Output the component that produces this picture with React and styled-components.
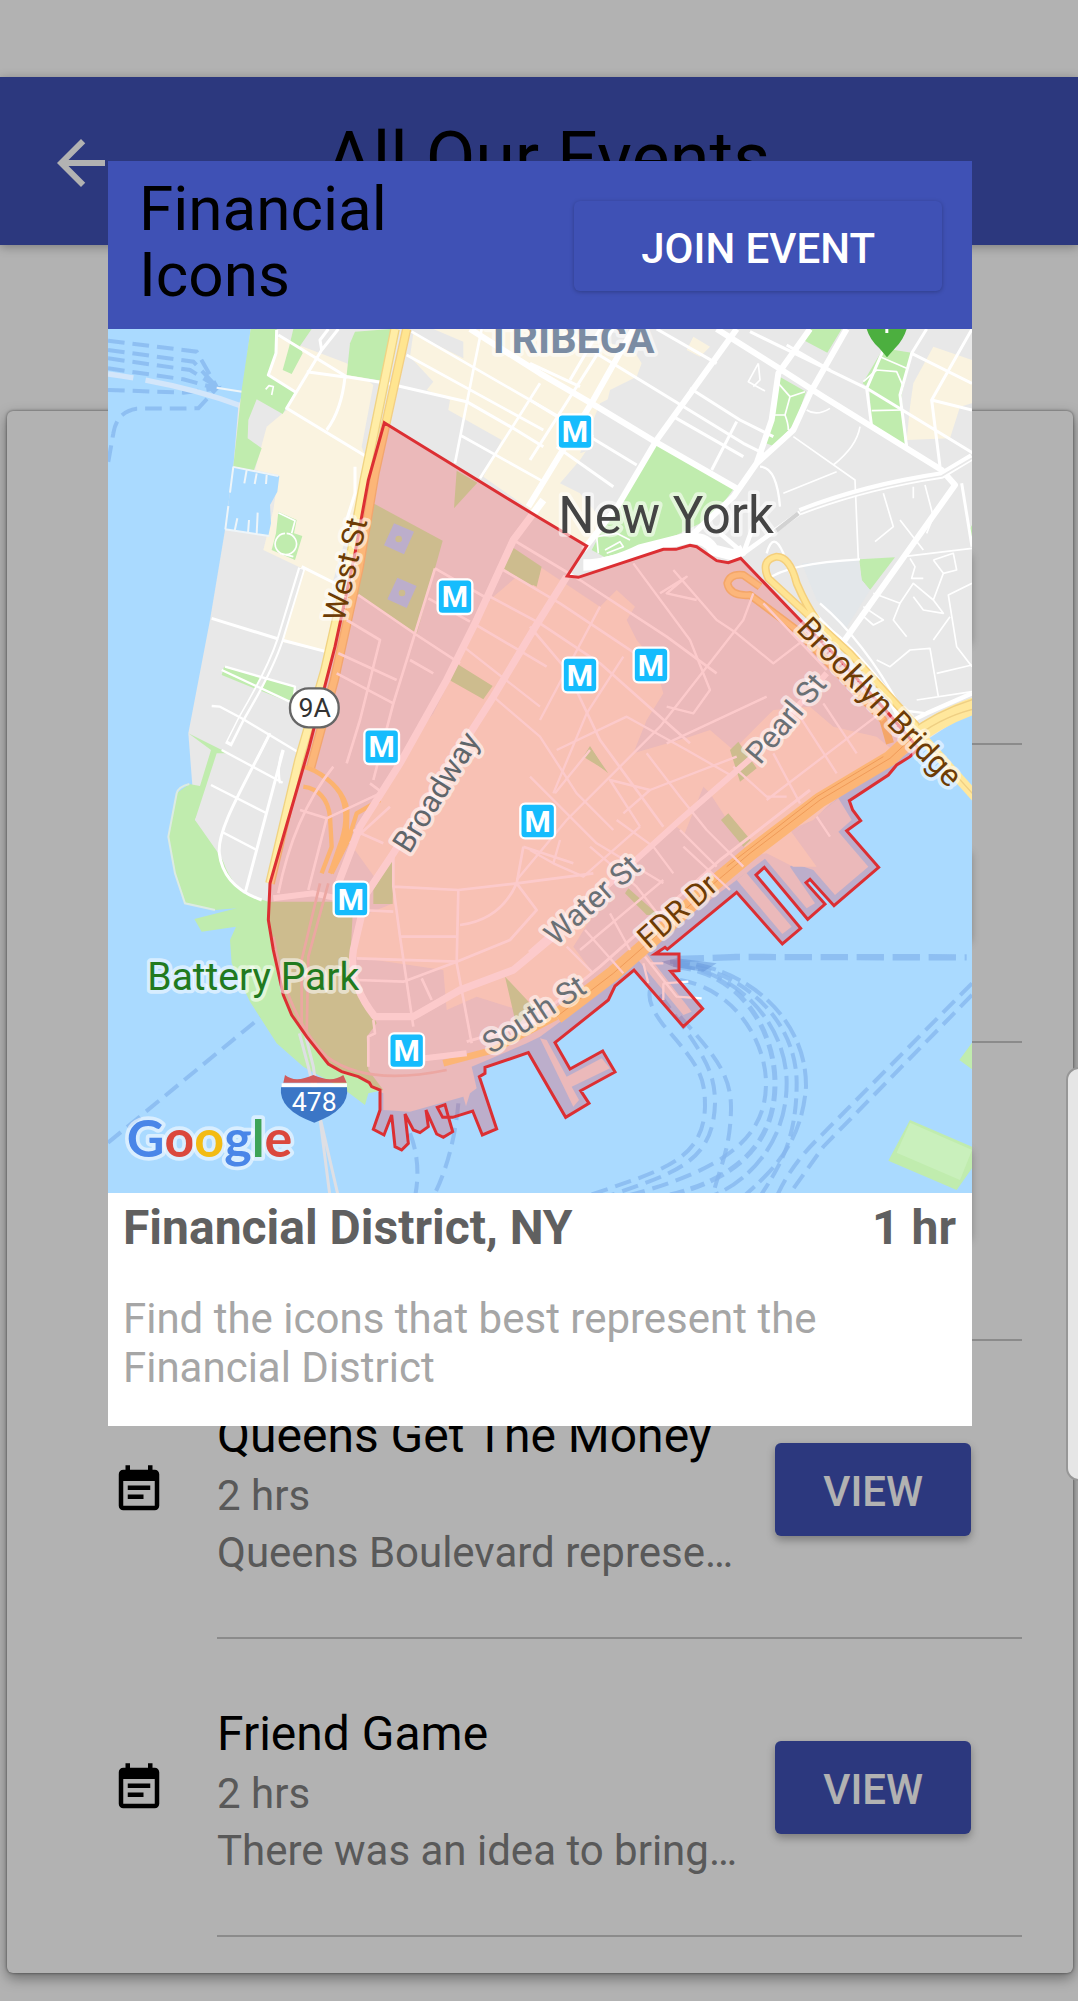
import React from "react";
import styled, { createGlobalStyle } from "styled-components";
import { MdArrowBack, MdEventNote } from "react-icons/md";

const GlobalStyle = createGlobalStyle`
  * { box-sizing: border-box; }
  body {
    margin: 0;
    background: #fff;
    font-family: Roboto, "Liberation Sans", sans-serif;
  }
  h1, h2, h3, p, ul { margin: 0; padding: 0; font-weight: 400; }
`;

const Screen = styled.div`
  position: relative;
  padding-top: 77px;
  padding-bottom: 28px;
  overflow: hidden;
`;

const AppBar = styled.header`
  display: flex;
  align-items: center;
  height: 168px;
  padding: 0 99px 0 45px;
  background: #3f51b5;
  box-shadow: 0 2px 10px rgba(0, 0, 0, 0.3);
`;

const BackButton = styled.button`
  display: flex;
  padding: 4px 0 0;
  border: 0;
  background: none;
  color: #fff;
  font-size: 72px;
`;

const AppTitle = styled.h1`
  flex: 1;
  padding-bottom: 4px;
  text-align: center;
  font-size: 72px;
  line-height: 72px;
  color: #000;
`;

const Card = styled.main`
  margin: 166px 5px 0 7px;
  padding: 36px 0;
  border-radius: 6px;
  background: #fff;
  box-shadow: 0 5px 14px rgba(0, 0, 0, 0.4), 0 0 3px rgba(0, 0, 0, 0.5);
`;

const EventList = styled.ul`
  list-style: none;
`;

const EventRow = styled.li`
  display: flex;
  align-items: center;
  gap: 51px;
  padding: 0 51px 0 105px;
  font-size: 54px;
  color: #000;

  > svg { flex: none; }
`;

const EventContent = styled.div`
  display: flex;
  flex: 1;
  align-items: center;
  justify-content: space-between;
  min-width: 0;
  height: 298px;
  padding-right: 51px;
  border-bottom: 2px solid #c8c8c8;
`;

const EventText = styled.div`
  padding-top: 8px;
`;

const EventName = styled.h3`
  font-size: 48px;
  line-height: 62px;
`;

const EventMeta = styled.p`
  font-size: 42px;
  line-height: 57px;
  color: #808080;
`;

const Button = styled.button`
  flex: none;
  height: ${(p) => (p.$wide ? 90 : 93)}px;
  padding: 6px ${(p) => (p.$wide ? 67 : 48)}px 0;
  border: 0;
  border-radius: 6px;
  background: #3f51b5;
  color: #fff;
  font: 500 42px/48px Roboto, "Liberation Sans", sans-serif;
  box-shadow: ${(p) =>
    p.$wide ? "0 1px 4px rgba(0, 0, 0, 0.25)" : "0 4px 8px rgba(0, 0, 0, 0.3)"};
`;

const Backdrop = styled.div`
  position: absolute;
  inset: 0;
  padding: 161px 106px 0 108px;
  background: rgba(0, 0, 0, 0.3);
`;

const Dialog = styled.section`
  background: #fff;
`;

const DialogHeader = styled.div`
  display: flex;
  align-items: center;
  justify-content: space-between;
  height: 168px;
  padding: 0 30px 6px 31px;
  background: #3f51b5;

  button { margin-top: 8px; }
`;

const DialogTitle = styled.h2`
  width: 300px;
  font-size: 62px;
  line-height: 66px;
`;

const DialogBody = styled.div`
  padding: 6px 16px 34px 15px;
`;

const PlaceLine = styled.div`
  display: flex;
  justify-content: space-between;
  margin-bottom: 38px;
  font-size: 48px;
  font-weight: 700;
  line-height: 57px;
  color: #606060;
`;

const Description = styled.p`
  font-size: 42px;
  line-height: 49px;
  color: #a6a6a6;
`;

const EdgeHandle = styled.div`
  position: absolute;
  top: 1067px;
  right: -14px;
  width: 26px;
  height: 414px;
  border: 2px solid #979797;
  border-radius: 20px;
  background: #e6e6e6;
`;

const MapSvg = styled.svg`
  display: block;
  width: 100%;
  aspect-ratio: 1;

  text { font-family: Roboto, "Liberation Sans", sans-serif; }
`;

const MapLabel = styled.text`
  font-size: ${(p) => p.$size}px;
  font-weight: ${(p) => p.$weight || 400};
  fill: ${(p) => p.$color};
  stroke: rgba(255, 255, 255, 0.55);
  stroke-width: 22px;
  stroke-linejoin: round;
  paint-order: stroke;
`;

const ProviderMark = styled(MapLabel)`
  && { font-family: Lato, sans-serif; }
`;

const GREEN = "#c0ecae";
const CREAM = "#faf3e0";
const LAND = "#e8e8e8";

/* The map is drawn in four sheets of 1290 units, joined at their edges. */
const SHEET = 1290;
const northEast = `translate(${SHEET} 0)`;
const southWest = `translate(0 ${SHEET})`;
const southEast = `translate(${SHEET} ${SHEET})`;

const shift = (dx, dy, points) =>
  points
    .trim()
    .split(/\s+/)
    .map((p) => p.split(",").map(Number))
    .map(([x, y]) => `${x + dx},${y + dy}`)
    .join(" ");

const district = [
  shift(0, 0, "853,308 1320,595"),
  shift(SHEET, 0, "170,678 112,768 145,772 400,688 438,688 480,676 500,680 560,722 595,728 632,715 810,900 930,1020 1075,1180 1165,1285"),
  shift(SHEET, SHEET, `1140,20 1100,45 1075,75 958,152 968,180 992,212 950,242 1046,352 912,467 840,388
    828,398 885,462 833,508 703,352 678,375 812,535 757,582 620,427 412,598 405,592 375,612 447,612
    447,662 422,664 518,776 460,830 312,660 255,708 235,750 75,878 120,957 218,903 255,966 152,1022
    177,1060 107,1102 -5,908`),
  shift(0, SHEET, `1155,952 1155,970 1138,980 1190,1137 1147,1155 1118,1083 1058,1102 1028,1102 1012,1072 1035,1064
    1045,1100 1058,1145 1030,1162 1010,1152 978,1080 985,1130 960,1148 940,1140 915,1092 925,1180 905,1200 885,1190
    875,1095 852,1155 820,1138 840,1080 840,1020 815,1010 808,998 775,980 725,965 685,942 620,860 575,795 550,735
    520,600 505,510 510,400 560,225 625,0`),
  shift(0, 0, "705,980 765,700 805,480"),
].join(" ");

const land = [
  shift(0, 0, "2616,27 452,27 440,120 430,210 415,260 400,440 375,630 330,900 265,1240"),
  shift(0, SHEET, "285,210 350,400 420,480 505,520 560,800 640,950 800,1010 850,1030 850,1080 930,1085 1090,1040 1098,1068 1110,1030 1130,1015 1115,950"),
  shift(SHEET, SHEET, "-10,880 30,860 200,735 300,645 340,600 420,540 620,390 700,330 930,140 1140,5"),
  shift(SHEET, 0, "1190,1260 1326,1170"),
].join(" ");

const stations = [
  [1425, 335], [1065, 830], [1440, 1065], [1653, 1035],
  [845, 1280], [1313, 1503], [753, 1737], [920, 2192],
];

const Roads = ({ color = "#fff", width, d }) => (
  <path d={d} fill="none" stroke={color} strokeWidth={width} strokeLinejoin="round" />
);

const Ferry = ({ d, width = 12, dash = "50 24" }) => (
  <path d={d} fill="none" stroke="#84b6ee" strokeOpacity="0.75" strokeWidth={width} strokeDasharray={dash} />
);

function DistrictMap() {
  return (
    <MapSvg viewBox="24 27 2592 2592" role="img" aria-label="Map of the Financial District">
      <rect x="24" y="27" width="2592" height="2592" fill="#aadaff" />

      {/* ferry routes */}
      <Ferry d="M24 62 L290 95 L350 200 M24 90 L280 125 L350 200 M24 115 L270 150 L350 200 M24 145 L250 178 L350 205 M24 210 L250 218 L350 205 L295 265 L110 266 Q50 275 40 340 L24 430" />
      <path d="M24 162 Q260 195 430 260" fill="none" stroke="#d3e6fa" strokeWidth="16" strokeDasharray="76 38 900" />
      <g transform={southWest}>
        <Ferry d="M24 1178 L490 795 M930 1150 Q965 1240 945 1340 M1075 1060 Q1060 1220 1000 1340" />
      </g>
      <g transform={southEast}>
        <Ferry width={19} dash="82 26" d="M440 627 L620 621 L1310 622" />
        <Ferry d="M420 635 C640 640 830 800 828 1010 C815 1180 730 1260 640 1340" dash="60 20" />
        <Ferry d="M430 640 C620 650 800 800 800 1000 C800 1180 740 1260 690 1340" dash="48 20" />
        <Ferry d="M430 645 C620 660 770 820 770 1000 C770 1180 650 1300 540 1340" dash="66 20" />
        <Ferry d="M440 650 C640 670 735 850 735 1000 C735 1180 620 1290 400 1340" dash="44 20" width={15} />
        <Ferry d="M450 690 C620 720 708 880 708 1000 C708 1160 590 1260 280 1340" />
        <Ferry d="M360 720 Q350 760 400 825 C510 950 525 980 525 1070 C520 1230 400 1260 180 1335" />
        <Ferry d="M390 735 C520 910 555 960 555 1060 C550 1240 430 1270 230 1340" />
        <Ferry d="M450 800 C560 920 605 980 603 1080 C600 1200 570 1250 550 1330" />
        <Ferry d="M1326 700 L860 1170 Q780 1250 740 1340 M1326 735 L880 1190 L780 1330" />
        <path d="M395 635 L440 625 L560 640 L520 665 L430 650Z" fill="#5585cf" opacity="0.4" />
      </g>

      <polygon points={land} fill={LAND} />

      {/* piers */}
      <g transform={southEast} fill={LAND}>
        <path d="M30 865 L130 1070 L147 1050 L125 1010 L240 955 L215 925 L110 980 L50 870Z" />
        <path d="M320 625 L460 795 L485 785 L350 610Z" />
        <path d="M620 390 L757 552 L785 530 L650 370 L700 320 L830 475 L855 460 L780 350 L790 340 L850 360 L915 435 L1015 350 L925 245 L965 210 L925 145Z" />
      </g>

      {/* built-up blocks */}
      <g fill={CREAM}>
        <path d="M530 50 L740 130 L820 195 L785 380 L800 420 L765 560 L700 780 L690 1000 L545 965 L605 745 L490 690 L520 570 L535 465 L465 450 L500 320 L560 270 L580 215 L510 165Z" />
        <path d="M930 110 L1000 185 L980 210 L1050 240 L1045 270 L1205 360 L1150 470 L1320 590 L1450 670 L1540 640 L1440 520 L1380 490 L1440 420 L1500 330 L1530 210 L1610 170 L1625 130 L1600 90 L1380 27 L1000 27 L1090 65 L1090 115 L940 40Z" />
        <g transform={northEast}>
          <path d="M490 50 L540 80 L510 110 L470 90Z M1210 80 L1326 120 V250 L1290 260 L1260 355 L1130 360 L1140 260 L1150 190Z" />
        </g>
        <path d="M1180 830 L1250 770 L1320 740 L1500 860 L1550 810 L1605 860 L1580 900 L1610 960 L1660 1020 L1690 1120 L1640 1200 L1600 1300 L1770 1250 L1830 1230 L1900 1290 L2020 1170 L2130 1160 L2200 1220 L2330 1250 L2390 1300 L2210 1430 L2140 1500 L2070 1530 L2150 1640 L2080 1640 L2000 1600 L1850 1620 L1730 1520 L1550 1670 L1420 1880 L1480 1960 L1320 2090 L1130 2030 L1040 2070 L1030 1950 L760 1910 L780 1790 L880 1750 L750 1570 L840 1420 L900 1310 L1000 1180 L1040 1100 L1120 900Z" />
      </g>
      <g fill={LAND}>
        <path d="M1440 1890 L1550 1770 L1680 1670 L1750 1550 L1810 1400 L1830 1420 L1940 1590 L1850 1700 L1480 1960Z" />
        <path d="M1500 250 L1620 190 L1500 380 L1440 400Z" />
      </g>

      {/* marina */}
      <path d="M400 440 L538 468 L532 515 L510 555 L513 610 L505 647 L375 628Z" fill="#aadaff" />
      <path d="M440 450 L433 490 M470 460 L464 492 M500 465 L498 492 M412 595 L404 632 M447 600 L444 640 M473 578 L470 642 M400 440 L390 518 M385 558 L376 628 M400 440 L535 468 M375 628 L508 648 M350 203 L435 217" stroke="#eef5f9" strokeWidth="6" fill="none" />

      {/* parks */}
      <g fill={GREEN}>
        <path d="M452 27 H530 L528 100 L505 165 L585 215 L548 282 L470 238 L445 300 L443 355 L485 385 L462 450 L400 438 L425 210Z" />
        <path d="M580 27 H635 L600 78 L608 100 L575 162 L548 150 L568 78Z" />
        <path d="M765 35 L872 27 L845 182 L740 165 L750 70Z" />
        <path d="M535 575 L590 600 L582 640 L607 648 L585 720 L515 690 L528 640Z" />
        <path d="M372 1040 L585 1100 L575 1150 L365 1065Z" />
        <path d="M820 550 L1028 662 L950 942 L770 820Z" />
        <path d="M1070 452 L1132 488 L1062 565Z M1235 680 L1325 740 L1310 800 L1210 750Z M1072 1032 L1178 1098 L1150 1138 L1048 1080Z" />
        <path d="M265 1240 L385 1300 L360 1360 L285 1500 L355 1600 L430 1720 L505 1745 L760 1745 L750 1930 L830 2110 L800 2150 L805 2250 L850 2310 L805 2320 L795 2355 L735 2310 L610 2240 L530 2170 L450 2045 L395 1930 L390 1860 L408 1820 L305 1835 L283 1797 L410 1765 L345 1770 L255 1750 L225 1660 L205 1550 L230 1420 L268 1392 L300 1398 L333 1290Z" />
        <path d="M820 1752 L820 1710 L880 1610 L878 1752Z M1215 1970 L1300 2060 L1250 2120Z" />
        <g transform={northEast}>
          <path d="M372 368 L612 505 L550 590 L440 645 L230 715 L185 690 L270 530Z" />
          <path d="M745 168 L828 215 L795 310 L730 378 L708 370Z M835 27 H935 L892 98 L810 55Z" />
          <path d="M1060 85 L1145 98 L1115 225 L1125 378 L1025 318 L1018 205 L998 190Z" />
          <path d="M988 718 L1095 712 L1020 810 L995 780Z M1326 615 V650 L1315 635Z" />
          <path d="M0 740 L30 760 L5 800 L-40 770Z M180 1278 L225 1350 L160 1310Z M625 1265 L680 1345 L630 1385 L600 1290Z" />
        </g>
        <g transform={southEast}>
          <path d="M595 190 L662 270 L640 290 L573 210Z M295 415 L385 495 L350 495 L285 430Z M180 -10 L235 70 L165 15Z" />
          <path d="M1140 1110 L1326 1190 V1255 L1280 1320 L1075 1232Z M1326 878 V958 L1288 930Z" />
        </g>
      </g>
      <g transform={southEast}>
        <path d="M1140 1118 L1326 1200 L1290 1290 L1100 1208Z" fill="#c9f0bc" />
      </g>
      <path d="M333 1395 L285 1500 L360 1540 L385 1300Z" fill={LAND} />
      <path d="M350 1300 L385 1300 L600 1290 L500 1720 L430 1720 Q350 1640 360 1530 L285 1500Z" fill={LAND} />
      <path d="M268 1392 Q235 1400 230 1420 L205 1550 L225 1660 L255 1750 L345 1770" fill="none" stroke="#dcebe3" strokeWidth="6" />

      {/* memorial pools */}
      <g fill="#aadaff">
        <path d="M882 610 L942 635 L912 703 L852 676Z M892 773 L950 798 L920 864 L862 838Z" />
      </g>
      <circle cx="896" cy="657" r="10" fill={GREEN} />
      <circle cx="906" cy="819" r="10" fill={GREEN} />
      <path d="M2105 730 L2275 718 L2285 780 L2310 810 L2235 930 L2150 840Z" fill="#e3e7ea" />

      {/* west side streets */}
      <Roads width={9} d="M530 30 L528 100 L505 165 L585 215 M535 45 L740 170 L860 190 L1100 245 L1240 325 L1330 380 M715 27 L665 90 L560 265 L800 410 M665 90 L660 60 L685 27 M735 170 Q725 270 680 330 M620 155 L740 172 M765 440 L765 520 L740 600 M605 740 L715 795 M335 895 L545 960 L690 998 M545 965 L600 745" />
      <Roads width={22} d="M605 745 L540 960 Q510 1050 425 1195 L385 1275" />
      <Roads width={10} color={LAND} d="M605 748 L540 960 Q510 1050 425 1192 L388 1265" />
      <Roads width={7} d="M335 1158 L360 1160 L425 1195 L600 1300 M510 1240 L470 1320 M365 1050 L580 1150 L585 1100 L375 1040 M548 1290 Q530 1340 540 1390 M333 1395 L500 1480 M365 1290 L548 1388 M365 1535 L470 1590" />
      <Roads width={9} d="M510 1240 C430 1400 350 1530 358 1600 Q370 1700 485 1740 M550 1290 L435 1720" />
      <Roads width={5} d="M560 640 A32 32 0 1 1 555 640 M535 578 L585 602 L575 640 M540 700 L580 710 M497 208 L507 197 L520 200 L515 225" />

      {/* north streets */}
      <Roads width={8} d="M1145 27 L1120 150 L1065 430 M1320 190 L1140 475 M935 35 L1290 240 L1480 350 M1080 345 L1330 485 M920 105 L1330 330" />
      <Roads width={18} d="M1110 27 L1320 160 L1500 265 L1665 365 L1910 505 M1600 27 L1480 240 L1285 560" />
      <g transform={northEast}>
        <Roads width={18} d="M560 27 L740 140 L880 230 L1235 450 L1275 495 L930 980 M620 27 L380 360 L265 555 L160 690 M840 27 L745 160 L725 300 L680 430 L610 530 L470 660 M950 27 L840 220 L790 330 L680 430" />
        <Roads width={9} d="M100 40 L330 180 L640 370 L700 400 M250 27 L0 420 M0 130 L150 200 M480 205 L630 300 L730 350 M380 27 L560 130 M620 305 L545 450 M430 290 L640 410 M210 27 L120 180 M660 35 L1010 205 L1330 400 M770 75 L900 150 M1190 27 L1145 100 L1326 190 M1145 100 L1110 225 L1130 380 M1326 27 L1205 240 L1230 440 M1205 240 L1326 270 M1060 90 L1010 205 L1025 320 M1295 490 L1326 680 M0 240 L180 350 L320 435 M80 380 L250 500" />
        <Roads width={5} d="M685 130 L655 185 L705 213 M685 130 L690 180 L670 200 M745 190 L780 230 L825 215 M780 230 L765 285 Q775 310 775 330 M735 285 L765 285 M830 270 Q860 290 900 265 M990 320 Q980 380 910 435 M790 350 L975 480 L985 720 M760 520 L920 455 M1050 110 L1130 145 M1000 185 L1040 150 L1100 155 L1120 200 M1025 272 L1115 270 M1060 520 L1090 620 L1035 665 M1185 495 L1210 590 L1190 640 M1110 600 L1180 690 M1150 500 V535" />
        <Roads width={5} d="M1120 710 L1326 685 M1140 715 L1155 740 L1145 775 L1180 775 M1030 820 L1110 850 L1090 900 L1130 950 M1110 850 L1150 790 L1210 840 L1240 880 L1180 870 L1150 830 M1210 720 L1270 700 L1280 750 L1240 760 L1210 720 M1240 760 L1210 840 M1326 790 L1255 825 L1280 980 L1326 1040 M1210 960 L1260 890 M1040 1020 L1080 1040 L1140 990 L1200 985 L1225 1130 M1000 860 L1060 900 L1030 915 L990 880 M1220 1060 L1326 1035 M1160 1140 L1326 1115" />
        <Roads width={7} d="M690 440 Q740 440 750 560 M710 700 Q730 630 760 700 Q800 850 940 960 Q1060 1080 1110 1170 L1190 1180 M870 850 Q1000 960 1110 1160 M710 780 Q770 730 990 718" />
        <Roads width={22} d="M1326 410 L1235 465 Q1000 500 810 575" />
        <Roads width={5} color={LAND} d="M1326 415 L1235 468 Q1000 505 810 578" />
        <Roads width={14} d="M810 578 L640 700 M680 590 L640 700 L570 640" />
        <Roads width={13} color="#d2d2d2" d="M735 635 L805 580" />
        <Roads width={34} d="M160 735 Q240 735 330 690 L470 655 Q530 650 550 690 L610 705 L640 690" />
        <Roads width={5} d="M215 715 L330 690 M205 700 L200 650 L260 640 L300 660 M225 690 L270 665 L280 680 L230 700" />
        <Roads width={13} d="M1326 1120 L1190 1180 L1110 1220 M930 980 L1060 1100 L1110 1200" />
      </g>

      {/* highways */}
      <Roads width={29} color="#f0d383" d="M885 27 L793 480 L750 720 L675 1050 L597 1320 L510 1690" />
      <Roads width={21} color="#ffeda6" d="M885 27 L793 480 L750 720 L675 1050 L597 1320 L510 1690" />
      <Roads width={28} color="#f3cf83" d="M920 27 L825 460 L778 740 L703 1080 L630 1350" />
      <Roads width={20} color="#ffe590" d="M920 27 L825 460 L778 740 L703 1080 L630 1350" />
      <g transform={northEast}>
        <Roads width={24} color="#f4cf7d" d="M860 900 Q830 860 800 790 Q780 710 740 710 Q690 720 715 775 L960 1000 L1180 1240 M690 800 L640 765 Q600 760 592 790 Q600 830 660 825 L800 930 L1060 1200 L1080 1270" />
        <Roads width={15} color="#ffe493" d="M860 900 Q830 860 800 790 Q780 710 740 710 Q690 720 715 775 L960 1000 L1180 1240 M690 800 L640 765 Q600 760 592 790 Q600 830 660 825 L800 930 L1060 1200" />
        <Roads width={50} color="#ffe79c" d="M1340 1155 Q1230 1190 1120 1275" />
        <Roads width={4} color="#efcf83" d="M1340 1135 Q1220 1170 1130 1240 M1340 1165 Q1230 1190 1140 1265" />
        <Roads width={30} color="#ffe79c" d="M1130 1200 L1340 1435" />
        <Roads width={4} color="#efcf83" d="M1130 1200 L1340 1435" />
      </g>
      <Roads width={46} color="#ffe38c" d="M2440 1250 L2370 1315 L2160 1440 L1950 1600 L1830 1700 L1700 1820 L1540 1960 L1370 2090" />
      <Roads width={3} color="#efc067" d="M2440 1250 L2370 1315 L2160 1440 L1950 1600 L1830 1700 L1700 1820 L1540 1960 L1370 2090 M2350 1310 L2150 1430 L1880 1640" />
      <Roads width={20} color="#ffe38c" d="M1370 2090 L1180 2190 L1030 2230" />
      <g transform={southWest}>
        <Roads width={13} color="#ffe085" d="M610 50 Q680 70 720 130 Q750 190 725 270 L690 370 M610 110 Q680 120 690 200 L695 290 L665 370 M640 60 Q730 110 742 180 L740 260 L690 370 M840 150 L770 190 L745 270 L695 370" />
        <Roads width={9} color="#dedfe4" d="M598 850 L625 950 L715 1340 M615 850 L640 950 L690 1340" />
      </g>

      {/* downtown streets */}
      <Roads width={22} d="M1330 540 L1240 660 L1130 900 L1040 1080 L900 1330 L780 1520 L715 1690 M1400 770 L1300 930 L1180 1130 L880 1600 L800 1720 L760 1890 Q745 1990 825 2090 L940 2090 L1080 2010 L1240 1950 L1360 1850" />
      <Roads width={18} d="M2180 1060 L1970 1300 L1740 1500 L1530 1690 L1290 1900 M520 1735 L640 1720 L760 1745 M930 2220 L1100 2200" />
      <Roads width={9} d="M1100 2165 L1290 2110 L1500 1940 L1860 1620 L2130 1410" />
      <Roads width={8} d="M1240 660 L1440 780 L1700 950 L1850 1060 M1210 750 L1380 850 L1620 1010 M1170 830 L1320 910 L1500 1030 L1770 1270 M1120 910 L1340 1040 M1290 920 L1400 1050 L1500 1260 L1690 1520 M740 900 L840 960 L780 1200 L740 1330 M715 1000 L890 1080 M710 1060 L880 1150 M1005 745 L945 940 L880 1150 L820 1380 M1005 745 L1170 840 M985 835 L1110 905 M775 825 L950 945 L1080 1030 M930 1020 L1000 1060" />
      <Roads width={7} d="M1090 980 L1320 1160 M1180 1130 L1320 1250 L1430 1420 L1540 1530 M1600 730 L1770 960 L1830 1110 L1780 1180 L1700 1160 M1960 820 L1930 900 L1680 1220 L1400 1500 L1250 1680 M1990 850 L2180 1050 M1370 1290 L1580 1190 L1760 1290 L1900 1370 M1700 1270 L2000 1130 M1720 750 L1850 900 L1910 940 L2020 1030 L2150 930 M1500 860 L1320 1200 M1680 820 L1760 770 L1700 820 L1790 840 M1570 1010 L1460 1180 L1360 1420 M1640 1300 L1740 1430 L1820 1530 L1930 1640 M1470 1580 L1610 1700 L1680 1790 M1550 1500 L1660 1580 L1720 1660 M1740 1530 L1850 1640 M1900 1340 L2000 1430 L2060 1430 M2020 1300 L2100 1450 M2100 1190 L2210 1360 M2170 1150 L2270 1300 M2340 1180 L2000 1440" />
      <g transform={southWest}>
        <Roads width={8} d="M880 310 L880 410 L900 560 L940 830 M880 410 L1075 420 L1250 400 L1480 370 M1270 290 L1250 400 Q1200 510 1080 525 M1250 400 L1310 480 L1230 570 L1070 635 L910 695 L770 690 M1075 420 L1070 640 L1115 880 M770 625 L1070 635 M900 560 L1070 560 M780 480 L880 485 M965 685 L995 750 M1270 290 L1420 340 M750 280 L870 170 M600 180 L680 205 L625 420 M680 205 L840 130 M760 240 L850 280 M810 100 L850 130 M535 430 Q580 200 700 50 M820 810 L825 850 L805 860 L805 950" />
        <Roads width={8} color="#ead0c9" d="M660 400 L605 630 L605 850 M685 400 L625 620 L620 850 M520 560 Q560 800 680 920 Q800 1010 1040 960" />
      </g>
      <g transform={southEast}>
        <Roads width={7} d="M0 80 L200 280 L400 400 M75 130 L180 0 M0 300 L70 340 L160 380 L330 230 M70 340 L90 270 M330 230 L240 90 L360 120 L620 20 M360 120 L280 190 M110 590 L190 670 M150 600 L400 390 M165 540 L280 670 M240 490 L300 600 M460 290 L600 420 M860 200 L900 260 M340 640 L355 700 M345 620 L440 740 L515 745 M400 700 L475 695 M400 640 H360 M400 750 V700" />
      </g>

      {/* district area */}
      <polygon points={district} fill="#f42c30" fillOpacity="0.25" stroke="none" />
      <polygon points={district} fill="none" stroke="#dc2f33" strokeWidth="9" strokeLinejoin="miter" />

      {/* map pin */}
      <path d="M2300 27 H2420 Q2410 60 2385 85 L2361 112 L2338 85 Q2310 60 2300 27Z" fill="#4caf3f" />
      <rect x="2356" y="27" width="9" height="12" fill="#fff" />

      {/* labels */}
      <MapLabel $size={124} $weight={700} $color="#7b8ca3" x="1158" y="100">TRIBECA</MapLabel>
      <MapLabel $size={153} $color="#444" x="1375" y="640">New York</MapLabel>
      <MapLabel $size={117} $color="#217a1e" x="142" y="2010">Battery Park</MapLabel>
      <MapLabel $size={92} $color="#6d3c05" transform="translate(732 908) rotate(-77)">West St</MapLabel>
      <MapLabel $size={92} $color="#5f666b" transform="translate(928 1604) rotate(-58)">Broadway</MapLabel>
      <MapLabel $size={92} $color="#6a7075" transform="translate(1980 1337) rotate(-50)">Pearl St</MapLabel>
      <MapLabel $size={92} $color="#6a7075" transform="translate(1368 1880) rotate(-42)">Water St</MapLabel>
      <MapLabel $size={92} $color="#6a7075" transform="translate(1174 2204) rotate(-33)">South St</MapLabel>
      <MapLabel $size={92} $color="#6d3c05" transform="translate(1646 1890) rotate(-41)">FDR Dr</MapLabel>
      <MapLabel $size={95} $color="#6d3c05" transform="translate(2086 930) rotate(46)">Brooklyn Bridge</MapLabel>

      {stations.map(([x, y]) => (
        <g key={`${x}-${y}`}>
          <rect x={x - 52} y={y - 52} width="104" height="104" rx="14" fill="#16bcfd" stroke="#fff" strokeWidth="7" />
          <text x={x} y={y + 32} textAnchor="middle" fontSize="90" fontWeight="700" fill="#fff">M</text>
        </g>
      ))}

      {/* route shields */}
      <rect x="570" y="1105" width="146" height="117" rx="56" fill="#fff" stroke="#666" strokeWidth="7" />
      <text x="644" y="1191" textAnchor="middle" fontSize="80" fill="#333">9A</text>
      <g transform={southWest}>
        <path d="M550 998 L555 975 Q585 1000 640 975 Q695 1000 730 975 L740 998Z" fill="#d15b5b" />
        <path d="M543 1012 H741 Q750 1080 643 1118 Q535 1080 543 1012Z" fill="#3b76c6" />
        <rect x="545" y="1000" width="196" height="11" fill="#fff" />
        <text x="643" y="1083" textAnchor="middle" fontSize="80" fill="#fff">478</text>
      </g>

      {/* map provider mark */}
      <ProviderMark $size={156} $weight={700} $color="#4a86e8" x="80" y="2512">
        G<tspan fill="#db483c">o</tspan><tspan fill="#f3bb13">o</tspan>g<tspan fill="#3fa457">l</tspan><tspan fill="#db483c">e</tspan>
      </ProviderMark>
    </MapSvg>
  );
}

const events = [
  { id: 1 },
  { id: 2 },
  { id: 3 },
  { id: 4, name: "Queens Get The Money", duration: "2 hrs", summary: "Queens Boulevard represe…" },
  { id: 5, name: "Friend Game", duration: "2 hrs", summary: "There was an idea to bring…" },
];

export default function App() {
  return (
    <Screen>
      <GlobalStyle />
      <AppBar>
        <BackButton aria-label="Back"><MdArrowBack /></BackButton>
        <AppTitle>All Our Events</AppTitle>
      </AppBar>

      <Card>
        <EventList>
          {events.map((event) => (
            <EventRow key={event.id}>
              <MdEventNote />
              <EventContent>
                <EventText>
                  {event.name && <EventName>{event.name}</EventName>}
                  {event.duration && <EventMeta>{event.duration}</EventMeta>}
                  {event.summary && <EventMeta>{event.summary}</EventMeta>}
                </EventText>
                <Button>VIEW</Button>
              </EventContent>
            </EventRow>
          ))}
        </EventList>
      </Card>

      <Backdrop>
        <Dialog role="dialog" aria-labelledby="event-title">
          <DialogHeader>
            <DialogTitle id="event-title">Financial Icons</DialogTitle>
            <Button $wide>JOIN EVENT</Button>
          </DialogHeader>
          <DistrictMap />
          <DialogBody>
            <PlaceLine>
              <span>Financial District, NY</span>
              <span>1 hr</span>
            </PlaceLine>
            <Description>Find the icons that best represent the Financial District</Description>
          </DialogBody>
        </Dialog>
      </Backdrop>
      <EdgeHandle />
    </Screen>
  );
}
